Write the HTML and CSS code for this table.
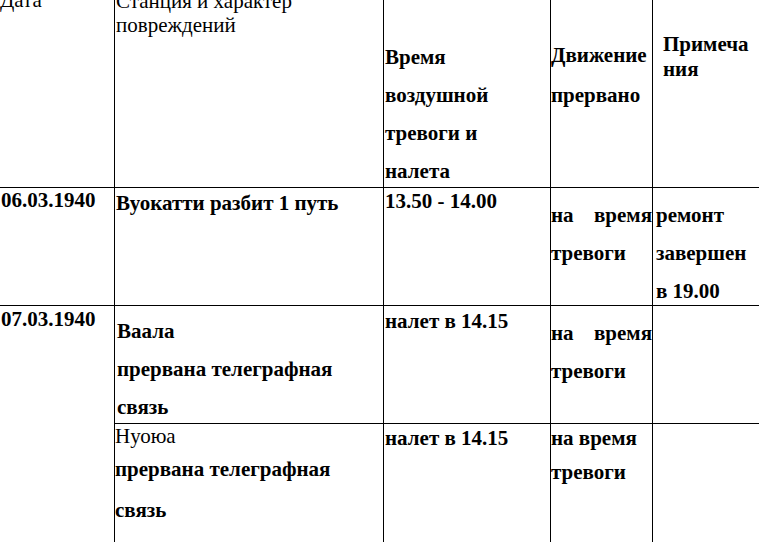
FILE: index.html
```html
<!DOCTYPE html>
<html lang="ru">
<head>
<meta charset="utf-8">
<title>Повреждения</title>
<link rel="stylesheet" href="styles.css">
</head>
<body>
<div class="sheet">
  <div class="cell"><div class="t plain h-date">Дата</div></div>
  <div class="cell"><div class="t plain h-station">Станция и характер<br>повреждений</div></div>
  <div class="cell"><div class="t h-time">Время<br>воздушной<br>тревоги и<br>налета</div></div>
  <div class="cell"><div class="t h-move">Движение<br>прервано</div></div>
  <div class="cell last"><div class="t h-note">Примеча<br>ния</div></div>

  <div class="cell"><div class="t r1-date">06.03.1940</div></div>
  <div class="cell"><div class="t r1-station">Вуокатти разбит 1 путь</div></div>
  <div class="cell"><div class="t r1-time">13.50 - 14.00</div></div>
  <div class="cell"><div class="t just r1-move">на время тревоги</div></div>
  <div class="cell last"><div class="t r1-note">ремонт<br>завершен<br>в 19.00</div></div>

  <div class="cell span2 end"><div class="t r2-date">07.03.1940</div></div>
  <div class="cell"><div class="t r2-station">Ваала<br>прервана телеграфная<br>связь</div></div>
  <div class="cell"><div class="t r2-time">налет в 14.15</div></div>
  <div class="cell"><div class="t just r2-move">на время тревоги</div></div>
  <div class="cell last"></div>

  <div class="cell end">
    <div class="t plain r3-l1">Нуоюа</div>
    <div class="t r3-l2">прервана телеграфная</div>
    <div class="t r3-l3">связь</div>
  </div>
  <div class="cell end"><div class="t r3-time">налет в 14.15</div></div>
  <div class="cell end"><div class="t r3-move">на время<br>тревоги</div></div>
  <div class="cell last end"></div>
</div>
</body>
</html>
```

FILE: styles.css
```css
body {
  margin: 0;
  font: 21px "Times New Roman", "Liberation Serif", serif;
}

.sheet {
  display: grid;
  grid-template-columns: 115px 269px 167px 102px 106px;
  grid-template-rows: 188px 118px 118px 118px;
  width: 759px;
  height: 542px;
  overflow: hidden;
  font: 21px "Times New Roman", "Liberation Serif", serif;
}

.cell {
  font: bold 21px "Times New Roman", "Liberation Serif", serif;
  border-right: 1px solid black;
  border-bottom: 1px solid black;
}
.cell.last { border-right: none; }
.cell.end { border-bottom: none; }
.cell.span2 { grid-row: span 2; }

.t {
  font: bold 21px/24px "Times New Roman", "Liberation Serif", serif;
  white-space: nowrap;
}
.t.plain {
  font: 21px/24px "Times New Roman", "Liberation Serif", serif;
}
.t.just {
  white-space: normal;
  text-align: justify;
}

/* header */
.h-date { line-height: 38px; margin-top: -12px; }
.h-station { line-height: 36px; margin-top: -11px; padding-left: 1px; }
.h-time { line-height: 38px; padding-top: 38px; padding-left: 1px; }
.h-move { line-height: 40px; padding-top: 35px; }
.h-note { line-height: 25px; padding-top: 32px; padding-left: 10px; }

/* row 1 */
.r1-date { line-height: 24px; padding-left: 1px; }
.r1-station { line-height: 24px; padding-top: 3px; padding-left: 1px; }
.r1-time { line-height: 24px; padding-top: 1px; padding-left: 1px; }
.r1-move { line-height: 38px; padding-top: 8px; }
.r1-note { line-height: 38px; padding-top: 8px; padding-left: 3px; }

/* row 2 */
.r2-date { line-height: 24px; padding-top: 1px; padding-left: 1px; }
.r2-station { line-height: 38px; padding-top: 6px; padding-left: 2px; }
.r2-time { line-height: 24px; padding-top: 3px; padding-left: 1px; }
.r2-move { line-height: 38px; padding-top: 8px; }

/* row 3 */
.r3-l1 { line-height: 28px; }
.r3-l2 { line-height: 42px; }
.r3-l3 { line-height: 40px; }
.r3-time { line-height: 28px; padding-left: 1px; }
.r3-move { line-height: 34px; margin-top: -3px; }
```
